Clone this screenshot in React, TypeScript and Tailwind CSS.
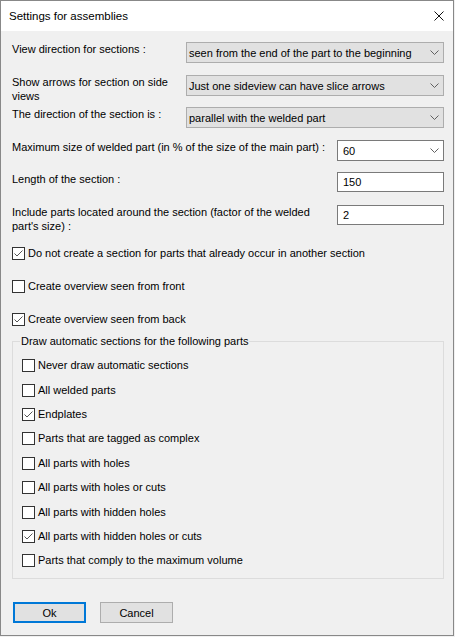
import type { ReactNode } from 'react';

function Chevron() {
  return (
    <svg width="9" height="5" viewBox="0 0 9 5" className="flex-none">
      <path d="M0.5 0.5 L4.5 4.5 L8.5 0.5" fill="none" stroke="#606060" strokeWidth="1" />
    </svg>
  );
}

function Select({ value, wide }: { value: string; wide?: boolean }) {
  return (
    <div
      className={
        wide
          ? 'flex h-[21px] w-[258px] flex-none items-center justify-between border border-[#adadad] bg-[#e1e1e1] pl-[2px] pr-[4px]'
          : 'flex h-[21px] w-[107px] flex-none items-center justify-between border border-[#7a7a7a] bg-white pl-[5px] pr-[4px]'
      }
    >
      <span className="whitespace-nowrap">{value}</span>
      <Chevron />
    </div>
  );
}

function TextBox({ value }: { value: string }) {
  return (
    <div className="flex h-[20px] w-[107px] flex-none items-center border border-[#7a7a7a] bg-white pl-[5px]">
      {value}
    </div>
  );
}

function Box({ checked }: { checked?: boolean }) {
  return (
    <span className="flex h-[13px] w-[13px] flex-none items-center justify-center border border-[#333333] bg-white">
      {checked && (
        <svg width="11" height="11" viewBox="0 0 11 11">
          <path d="M1.5 5.5 L4 8 L9.5 2.5" fill="none" stroke="#555555" strokeWidth="1" />
        </svg>
      )}
    </span>
  );
}

function Row({ label, control, height }: { label: ReactNode; control: ReactNode; height: string }) {
  return (
    <div className={`flex items-start justify-between ${height}`}>
      <div className="whitespace-nowrap">{label}</div>
      {control}
    </div>
  );
}

const groupItems: [string, boolean][] = [
  ['Never draw automatic sections', false],
  ['All welded parts', false],
  ['Endplates', true],
  ['Parts that are tagged as complex', false],
  ['All parts with holes', false],
  ['All parts with holes or cuts', false],
  ['All parts with hidden holes', false],
  ['All parts with hidden holes or cuts', true],
  ['Parts that comply to the maximum volume', false],
];

export default function App() {
  return (
    <div className="h-[637px] w-[455px] bg-[#f0f0f0] font-['Liberation_Sans',Arial,sans-serif] text-[11px] leading-[14px] text-black">
      <div className="flex h-[636px] w-[454px] flex-col border border-[#888888] bg-[#f0f0f0]">
        <div className="flex h-[30px] flex-none items-center justify-between bg-white pl-[8px] pr-[9px]">
          <span className="text-[11.5px]">Settings for assemblies</span>
          <svg width="10" height="10" viewBox="0 0 10 10">
            <path d="M0.5 0.5 L9.5 9.5 M9.5 0.5 L0.5 9.5" fill="none" stroke="#111111" strokeWidth="1" />
          </svg>
        </div>

        <div className="flex flex-col pl-[11px] pr-[9px] pt-[11px]">
          <Row height="h-[33px]" label="View direction for sections :" control={<Select wide value="seen from the end of the part to the beginning" />} />
          <Row
            height="h-[32px]"
            label={
              <>
                Show arrows for section on side
                <br />
                views
              </>
            }
            control={<Select wide value="Just one sideview can have slice arrows" />}
          />
          <Row height="h-[33px]" label="The direction of the section is :" control={<Select wide value="parallel with the welded part" />} />
          <Row height="h-[32px]" label="Maximum size of welded part (in % of the size of the main part) :" control={<Select value="60" />} />
          <Row height="h-[33px]" label="Length of the section :" control={<TextBox value="150" />} />
          <Row
            height="h-[42px]"
            label={
              <>
                Include parts located around the section (factor of the welded
                <br />
                part's size) :
              </>
            }
            control={<TextBox value="2" />}
          />

          <label className="flex h-[33px] items-start gap-[3px] leading-[13px]">
            <Box checked />
            <span>Do not create a section for parts that already occur in another section</span>
          </label>
          <label className="flex h-[33px] items-start gap-[3px] leading-[13px]">
            <Box />
            <span>Create overview seen from front</span>
          </label>
          <label className="flex h-[21px] items-start gap-[3px] leading-[13px]">
            <Box checked />
            <span>Create overview seen from back</span>
          </label>

          <fieldset className="border border-[#dcdcdc] pb-[5px] pl-[9px] pt-[5.5px]">
            <legend className="-ml-[2px] px-[1px] leading-[14px]">Draw automatic sections for the following parts</legend>
            {groupItems.map(([label, checked]) => (
              <label key={label} className="flex h-[24.4px] items-center gap-[3px] leading-[13px]">
                <Box checked={checked} />
                <span>{label}</span>
              </label>
            ))}
          </fieldset>

          <div className="mt-[23px] flex gap-[14px] pl-[1px]">
            <button className="flex h-[21px] w-[73px] items-center justify-center border-2 border-[#0078d7] bg-[#e1e1e1]">Ok</button>
            <button className="flex h-[21px] w-[73px] items-center justify-center border border-[#adadad] bg-[#e1e1e1]">Cancel</button>
          </div>
        </div>
      </div>
    </div>
  );
}
